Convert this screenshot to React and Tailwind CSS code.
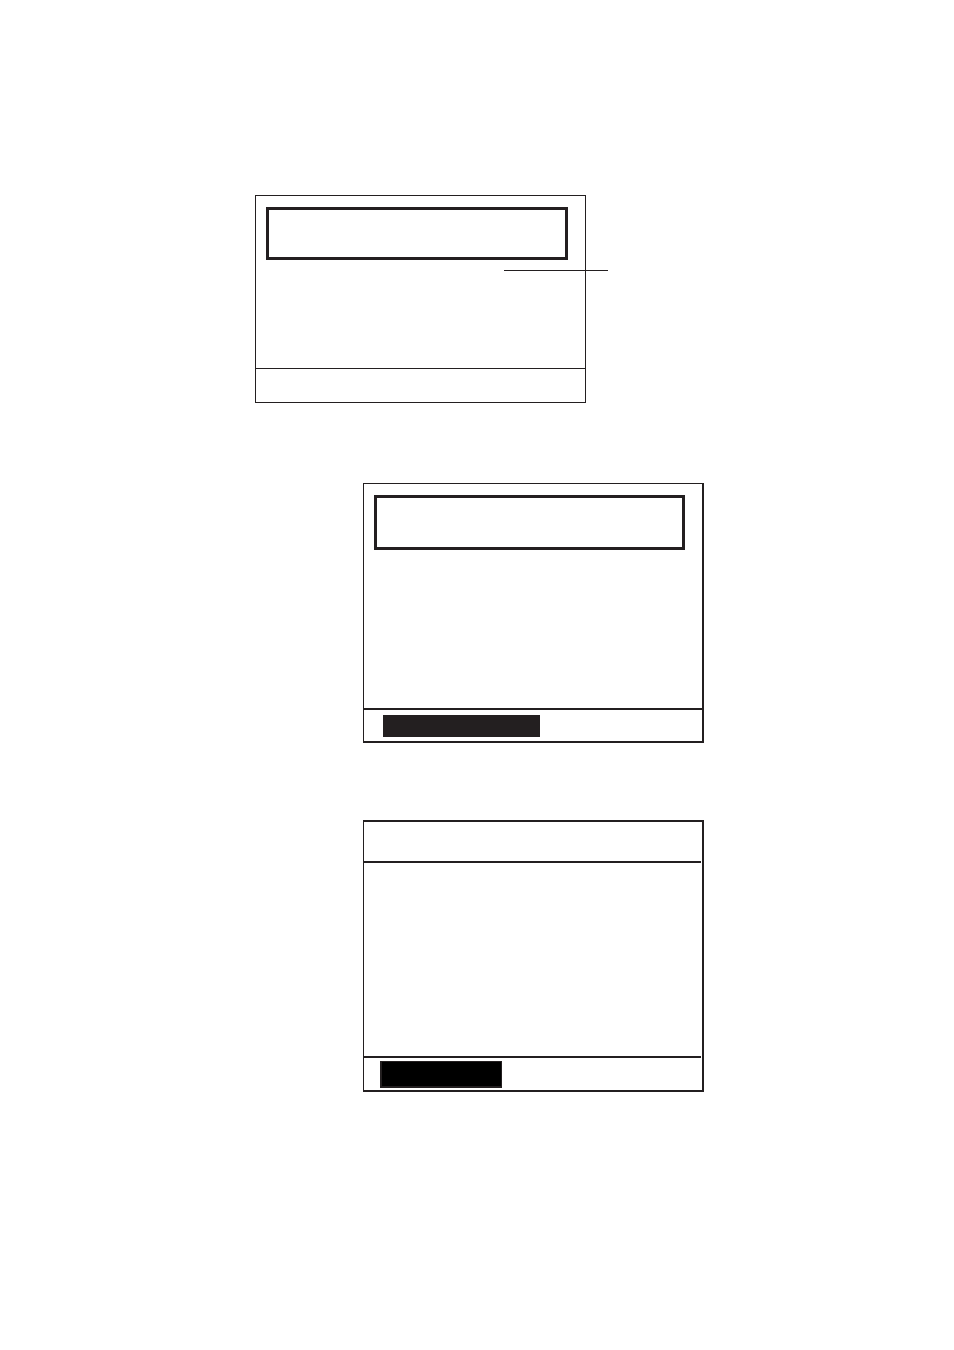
import React from 'react';

// thick box at the top of a screen
const TitleBox = ({ className }) => (
  <div className={`border-3 border-[#231f20] ${className}`} />
);

const Callout = () => (
  <div className="absolute top-[74px] -right-[23px] w-[104px] h-px bg-[#231f20]" />
);

const SelectScreen = () => (
  <section className="relative ml-[255px] mr-[368px] border border-[#231f20]">
    <div className="min-h-[172px] pt-[11px] pl-[10px] pr-[17px]">
      <TitleBox className="h-[53px]" />
    </div>
    <div className="h-[34px] border-t border-[#231f20]" />
    <Callout />
  </section>
);

const EntryScreen = () => (
  <section className="ml-[363px] mr-[250px] border border-r-2 border-b-2 border-[#231f20]">
    <div className="min-h-[224px] pt-[11px] pl-[10px] pr-[17px]">
      <TitleBox className="h-[55px]" />
    </div>
    <div className="h-[33px] pt-[5px] pl-[19px] border-t-2 border-[#231f20]">
      <div className="w-[157px] h-[22px] bg-[#231f20]" />
    </div>
  </section>
);

const ListScreen = () => (
  <section className="ml-[363px] mr-[250px] pr-px border-y-2 border-l border-r-2 border-[#231f20]">
    <div className="h-[41px] border-b-2 border-[#231f20]" />
    <div className="min-h-[193px]" />
    <div className="h-[34px] pt-[3px] pl-4 border-t-2 border-[#231f20]">
      <div className="w-[122px] h-[27px] bg-black border border-l-2 border-b-2 border-[#231f20]" />
    </div>
  </section>
);

export default function App() {
  return (
    <main className="min-h-screen bg-white pt-[195px] pb-[120px] flex flex-col">
      <SelectScreen />
      <div className="h-20" />
      <EntryScreen />
      <div className="h-[77px]" />
      <ListScreen />
    </main>
  );
}
